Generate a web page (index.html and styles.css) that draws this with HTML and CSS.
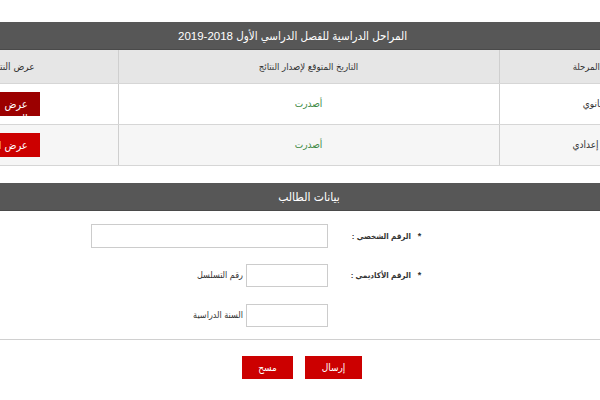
FILE: index.html
```html
<!DOCTYPE html>
<html lang="ar">
<head>
<meta charset="utf-8">
<link rel="stylesheet" href="styles.css">
</head>
<body>
<div class="wide" dir="rtl">
  <div class="bar bar1">المراحل الدراسية للفصل الدراسي الأول 2018-2019</div>
  <table class="stages">
    <thead>
      <tr>
        <th class="c-stage">اسم المرحلة</th>
        <th class="c-date">التاريخ المتوقع لإصدار النتائج</th>
        <th class="c-act">عرض النتائج</th>
      </tr>
    </thead>
    <tbody>
      <tr>
        <td>الثانوي</td>
        <td class="ok">أصدرت</td>
        <td><span class="btn btn-dark wrap">عرض النتيجة</span></td>
      </tr>
      <tr class="alt">
        <td>ثالث إعدادي</td>
        <td class="ok">أصدرت</td>
        <td><span class="btn">عرض النتيجة</span></td>
      </tr>
    </tbody>
  </table>

  <div class="bar bar2">بيانات الطالب</div>

  <div class="form">
    <div class="row r1">
      <div class="lbl"><span class="star">*</span>الرقم الشخصي :</div>
      <div class="field"><span class="input long"></span></div>
    </div>
    <div class="row r2">
      <div class="lbl"><span class="star">*</span>الرقم الأكاديمي :</div>
      <div class="field"><span class="input short"></span><span class="hint">رقم التسلسل</span></div>
    </div>
    <div class="row r3">
      <div class="lbl"></div>
      <div class="field"><span class="input short"></span><span class="hint">السنة الدراسية</span></div>
    </div>
  </div>
  <div class="rule"></div>
  <div class="actions">
    <span class="btn btn-send">إرسال</span>
    <span class="btn btn-clear">مسح</span>
  </div>
</div>
</body>
</html>
```

FILE: styles.css
```css
html, body {
  margin: 0;
  padding: 0;
  background: #ffffff;
  overflow: hidden;
}
body {
  width: 600px;
  height: 400px;
  font-family: "Liberation Sans", "DejaVu Sans Condensed", "DejaVu Sans", sans-serif;
  color: #333;
}
.wide {
  width: 793px;
  margin-left: -102px;
  padding-top: 22px;
  direction: rtl;
}
.bar {
  height: 28px;
  line-height: 28px;
  background: #575757;
  color: #fff;
  text-align: center;
  font-size: 12px;
  border-bottom: 1px solid #4a4a4a;
  box-sizing: border-box;
}
.bar1 {
  padding-right: 4px;
  font-size: 11.5px;
}
.bar2 {
  margin-top: 17px;
  padding-left: 29px;
}
.stages {
  width: 793px;
  border-collapse: collapse;
  table-layout: fixed;
  font-size: 10px;
}
.stages th {
  height: 33px;
  background: #e6e6e6;
  font-weight: normal;
  color: #333;
  border-left: 1px solid #cfcfcf;
  border-bottom: 1px solid #d6d6d6;
  padding: 0;
  box-sizing: border-box;
  font-size: 9.5px;
}
.stages th:last-child { border-left: none; }
.stages th.c-act { font-size: 10px; padding-left: 8px; }
.c-stage { width: 192px; }
.c-date { width: 381px; }
.c-act { width: 220px; }
.stages td {
  height: 41px;
  padding: 0;
  text-align: center;
  border-left: 1px solid #cfcfcf;
  border-bottom: 1px solid #d6d6d6;
  box-sizing: border-box;
  color: #333;
}
.stages td:last-child { border-left: none; }
.stages tr.alt td { background: #f6f6f6; }
.stages .ok { color: #3d8a45; }
.btn {
  display: inline-block;
  vertical-align: middle;
  background: #cc0000;
  color: #fff;
  font-size: 10px;
  text-align: center;
  box-sizing: border-box;
}
.stages .btn {
  width: 64px;
  height: 24px;
  line-height: 24px;
  white-space: nowrap;
  overflow: hidden;
  text-align: right;
  padding-right: 12px;
  font-size: 11px;
}
.stages .btn.wrap {
  white-space: normal;
  line-height: 14px;
  padding-top: 5px;
  padding-left: 22px;
}
.btn-dark { background: #9b0000; }

.form {
  padding-right: 267px;
  padding-top: 13px;
}
.row {
  display: flex;
  align-items: center;
}
.r2 { margin-top: 16px; }
.r3 { margin-top: 17px; }
.lbl {
  width: 84px;
  margin-left: 12px;
  font-size: 8px;
  font-weight: bold;
  color: #333;
  white-space: nowrap;
}
.star {
  display: inline-block;
  width: 9px;
  margin-left: 4px;
  font-size: 9px;
  font-weight: bold;
  text-align: center;
}
.field {
  display: flex;
  align-items: center;
}
.input {
  display: block;
  height: 24px;
  border: 1px solid #cccccc;
  box-sizing: border-box;
  background: #fff;
}
.long { width: 237px; }
.short { width: 82px; height: 23px; }
.hint {
  font-size: 9px;
  margin-right: 3px;
  color: #333;
}
.rule {
  height: 0;
  border-top: 1px solid #d0d0d0;
  margin-top: 12px;
}
.actions {
  display: flex;
  justify-content: center;
  gap: 12px;
  padding-top: 16px;
  padding-left: 15px;
}
.btn-send {
  width: 57px;
  height: 23px;
  line-height: 23px;
}
.btn-clear {
  width: 51px;
  height: 23px;
  line-height: 23px;
}
```
